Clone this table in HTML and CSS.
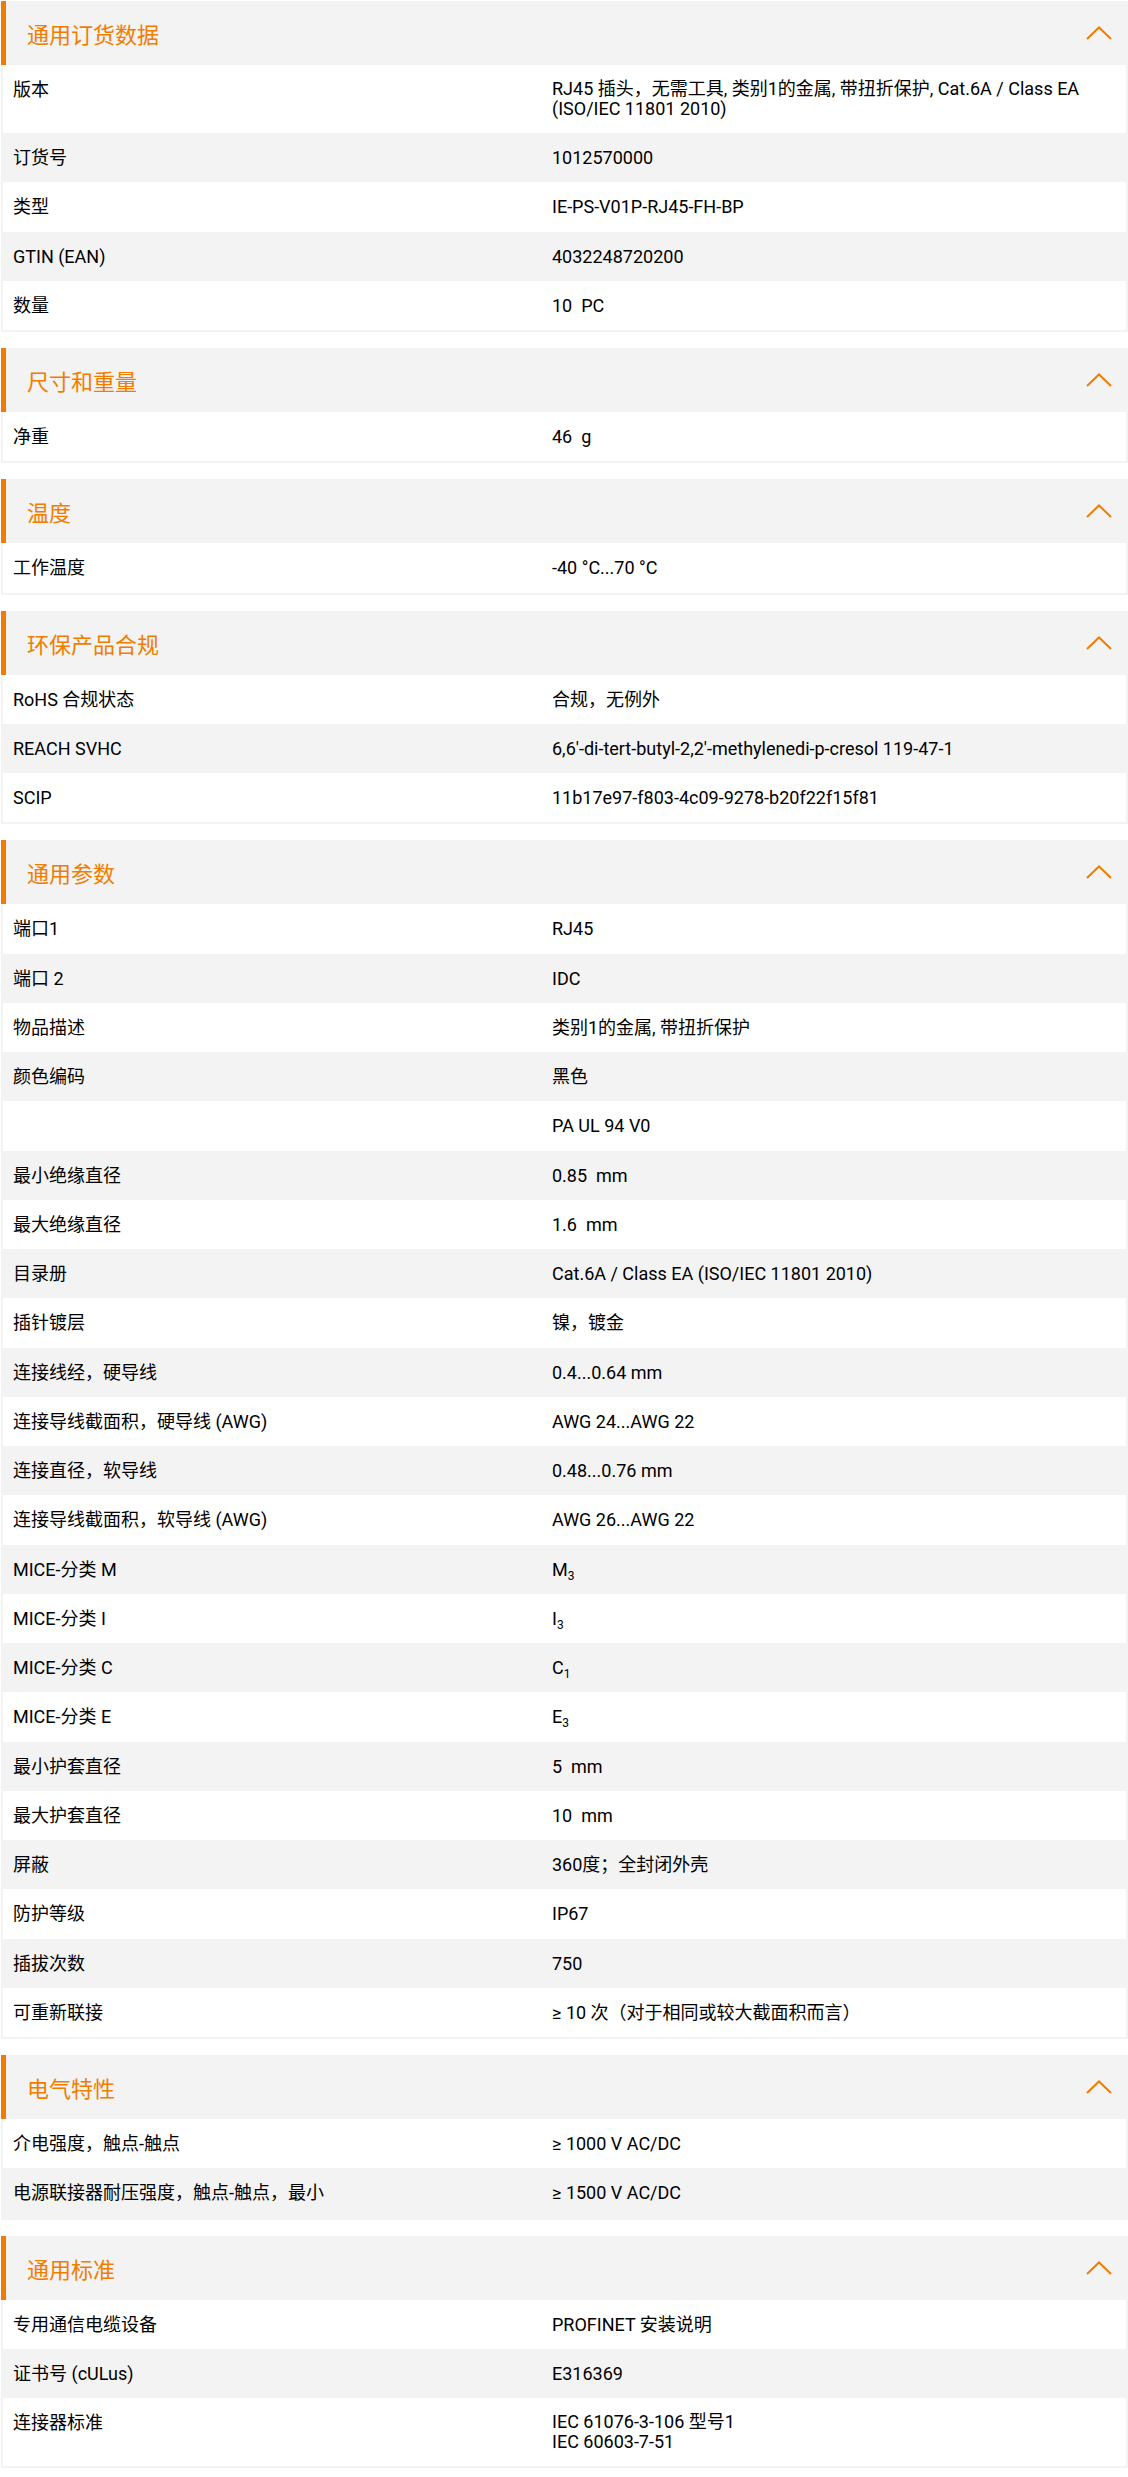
FILE: index.html
```html
<!DOCTYPE html>
<html lang="zh-CN">
<head>
<meta charset="utf-8">
<title>技术数据</title>
<link rel="stylesheet" href="styles.css">
</head>
<body>
<div class="page">

  <section class="card">
    <div class="card-head"><h2 class="card-title">通用订货数据</h2><svg class="chev" width="26" height="14" viewBox="0 0 26 14"><polyline points="1,13 13,1.5 25,13" /></svg></div>
    <div class="row"><div class="lbl">版本</div><div class="val multi">RJ45 插头，无需工具, 类别1的金属, 带扭折保护, Cat.6A / Class EA<br>(ISO/IEC 11801 2010)</div></div>
    <div class="row"><div class="lbl">订货号</div><div class="val">1012570000</div></div>
    <div class="row"><div class="lbl">类型</div><div class="val">IE-PS-V01P-RJ45-FH-BP</div></div>
    <div class="row"><div class="lbl">GTIN (EAN)</div><div class="val">4032248720200</div></div>
    <div class="row"><div class="lbl">数量</div><div class="val">10&nbsp; PC</div></div>
  </section>

  <section class="card">
    <div class="card-head"><h2 class="card-title">尺寸和重量</h2><svg class="chev" width="26" height="14" viewBox="0 0 26 14"><polyline points="1,13 13,1.5 25,13" /></svg></div>
    <div class="row"><div class="lbl">净重</div><div class="val">46&nbsp; g</div></div>
  </section>

  <section class="card">
    <div class="card-head"><h2 class="card-title">温度</h2><svg class="chev" width="26" height="14" viewBox="0 0 26 14"><polyline points="1,13 13,1.5 25,13" /></svg></div>
    <div class="row"><div class="lbl">工作温度</div><div class="val">-40 °C...70 °C</div></div>
  </section>

  <section class="card">
    <div class="card-head"><h2 class="card-title">环保产品合规</h2><svg class="chev" width="26" height="14" viewBox="0 0 26 14"><polyline points="1,13 13,1.5 25,13" /></svg></div>
    <div class="row"><div class="lbl">RoHS 合规状态</div><div class="val">合规，无例外</div></div>
    <div class="row"><div class="lbl">REACH SVHC</div><div class="val">6,6'-di-tert-butyl-2,2'-methylenedi-p-cresol 119-47-1</div></div>
    <div class="row"><div class="lbl">SCIP</div><div class="val">11b17e97-f803-4c09-9278-b20f22f15f81</div></div>
  </section>

  <section class="card">
    <div class="card-head"><h2 class="card-title">通用参数</h2><svg class="chev" width="26" height="14" viewBox="0 0 26 14"><polyline points="1,13 13,1.5 25,13" /></svg></div>
    <div class="row"><div class="lbl">端口1</div><div class="val">RJ45</div></div>
    <div class="row"><div class="lbl">端口 2</div><div class="val">IDC</div></div>
    <div class="row"><div class="lbl">物品描述</div><div class="val">类别1的金属, 带扭折保护</div></div>
    <div class="row"><div class="lbl">颜色编码</div><div class="val">黑色</div></div>
    <div class="row"><div class="lbl">&nbsp;</div><div class="val">PA UL 94 V0</div></div>
    <div class="row"><div class="lbl">最小绝缘直径</div><div class="val">0.85&nbsp; mm</div></div>
    <div class="row"><div class="lbl">最大绝缘直径</div><div class="val">1.6&nbsp; mm</div></div>
    <div class="row"><div class="lbl">目录册</div><div class="val">Cat.6A / Class EA (ISO/IEC 11801 2010)</div></div>
    <div class="row"><div class="lbl">插针镀层</div><div class="val">镍，镀金</div></div>
    <div class="row"><div class="lbl">连接线经，硬导线</div><div class="val">0.4...0.64 mm</div></div>
    <div class="row"><div class="lbl">连接导线截面积，硬导线 (AWG)</div><div class="val">AWG 24...AWG 22</div></div>
    <div class="row"><div class="lbl">连接直径，软导线</div><div class="val">0.48...0.76 mm</div></div>
    <div class="row"><div class="lbl">连接导线截面积，软导线 (AWG)</div><div class="val">AWG 26...AWG 22</div></div>
    <div class="row"><div class="lbl">MICE-分类 M</div><div class="val">M<sub>3</sub></div></div>
    <div class="row"><div class="lbl">MICE-分类 I</div><div class="val">I<sub>3</sub></div></div>
    <div class="row"><div class="lbl">MICE-分类 C</div><div class="val">C<sub>1</sub></div></div>
    <div class="row"><div class="lbl">MICE-分类 E</div><div class="val">E<sub>3</sub></div></div>
    <div class="row"><div class="lbl">最小护套直径</div><div class="val">5&nbsp; mm</div></div>
    <div class="row"><div class="lbl">最大护套直径</div><div class="val">10&nbsp; mm</div></div>
    <div class="row"><div class="lbl">屏蔽</div><div class="val">360度；全封闭外壳</div></div>
    <div class="row"><div class="lbl">防护等级</div><div class="val">IP67</div></div>
    <div class="row"><div class="lbl">插拔次数</div><div class="val">750</div></div>
    <div class="row"><div class="lbl">可重新联接</div><div class="val">≥ 10 次（对于相同或较大截面积而言）</div></div>
  </section>

  <section class="card">
    <div class="card-head"><h2 class="card-title">电气特性</h2><svg class="chev" width="26" height="14" viewBox="0 0 26 14"><polyline points="1,13 13,1.5 25,13" /></svg></div>
    <div class="row"><div class="lbl">介电强度，触点-触点</div><div class="val">≥ 1000 V AC/DC</div></div>
    <div class="row"><div class="lbl">电源联接器耐压强度，触点-触点，最小</div><div class="val">≥ 1500 V AC/DC</div></div>
  </section>

  <section class="card">
    <div class="card-head"><h2 class="card-title">通用标准</h2><svg class="chev" width="26" height="14" viewBox="0 0 26 14"><polyline points="1,13 13,1.5 25,13" /></svg></div>
    <div class="row"><div class="lbl">专用通信电缆设备</div><div class="val">PROFINET 安装说明</div></div>
    <div class="row"><div class="lbl">证书号 (cULus)</div><div class="val">E316369</div></div>
    <div class="row"><div class="lbl">连接器标准</div><div class="val multi">IEC 61076-3-106 型号1<br>IEC 60603-7-51</div></div>
  </section>

</div>
</body>
</html>
```

FILE: styles.css
```css
* {
  box-sizing: border-box;
}

html, body {
  margin: 0;
  padding: 0;
  background: #ffffff;
}

body {
  font-family: Roboto, "Noto Sans CJK SC", sans-serif;
  font-size: 18px;
  color: #000000;
}

.page {
  padding: 1px 0 0 1px;
}

.card {
  border: 2px solid #f3f3f3;
  border-top: 0;
  margin-bottom: 16px;
}

.card-head {
  display: flex;
  align-items: center;
  justify-content: space-between;
  height: 64px;
  margin: 0 -2px;
  padding: 0 16px 0 21px;
  background: #f3f3f3;
  border-left: 5px solid #f07d00;
}

.card-title {
  margin: 0;
  font-family: "Noto Sans CJK SC", sans-serif;
  font-size: 22px;
  font-weight: 400;
  color: #f07d00;
  line-height: 1;
}

.chev {
  display: block;
}

.chev polyline {
  fill: none;
  stroke: #f07d00;
  stroke-width: 2;
}

.row {
  display: grid;
  grid-template-columns: 539px 1fr;
  padding: 14px 10px;
  line-height: 21.25px;
  background: #ffffff;
}

.row:nth-of-type(odd) {
  background: #f3f3f3;
}

.lbl,
.val {
  min-width: 0;
}

.val.multi {
  line-height: 20px;
}

sub {
  font-size: 12px;
  line-height: 0;
  vertical-align: -4px;
}
```
